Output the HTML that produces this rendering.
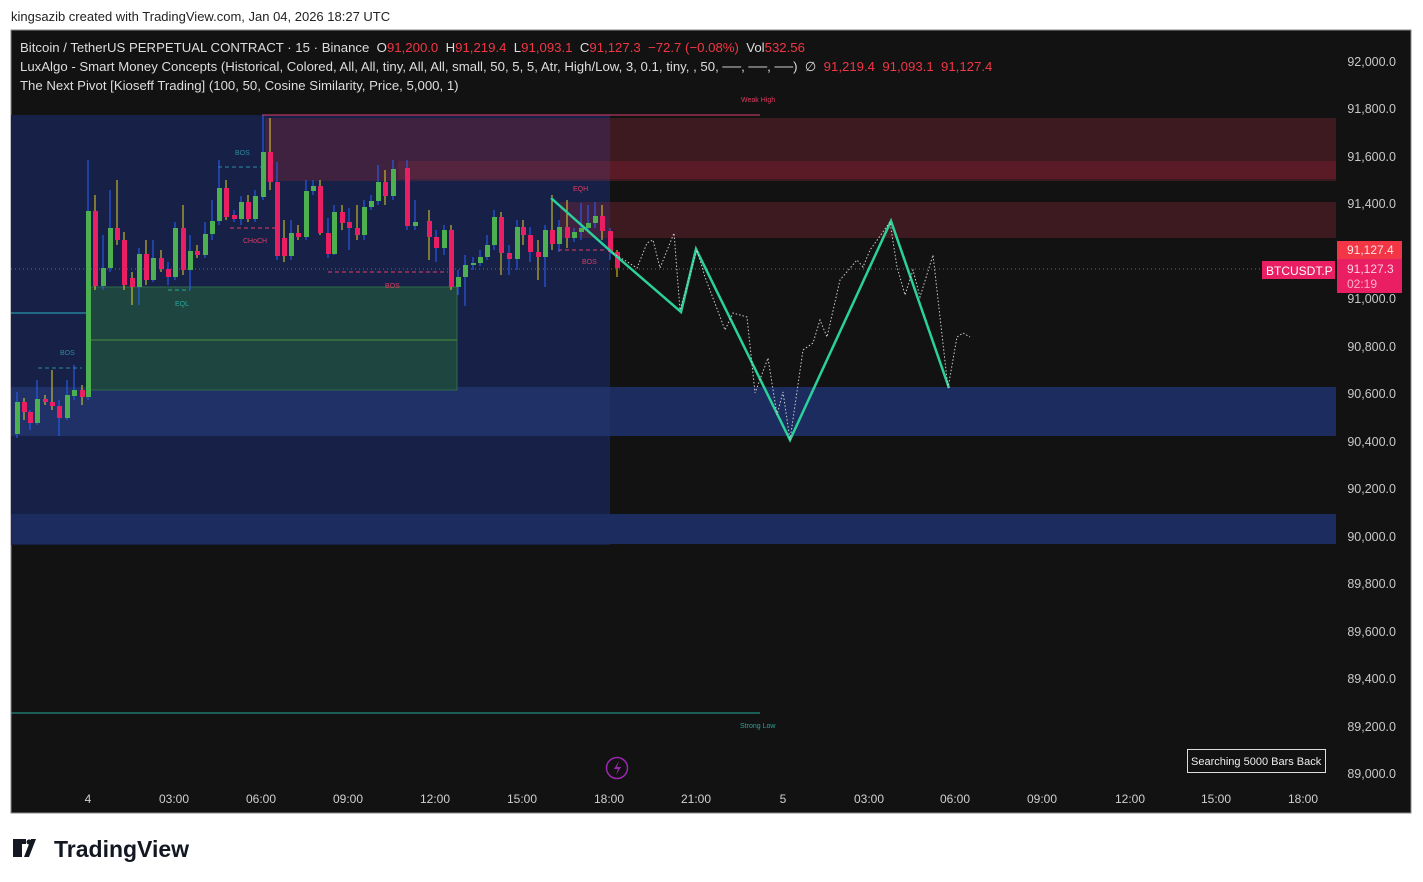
<!DOCTYPE html>
<html><head><meta charset="utf-8"><style>
body{margin:0;width:1423px;height:882px;background:#fff;overflow:hidden;font-family:"Liberation Sans",sans-serif;position:relative}
.t{position:absolute;white-space:nowrap}
</style></head><body>
<div class="t" style="left:11px;top:9px;font-size:13px;color:#222">kingsazib created with TradingView.com, Jan 04, 2026 18:27 UTC</div>
<div class="t" style="left:20px;top:38px;font-size:13.2px;color:#ddd;white-space:pre;line-height:19px">Bitcoin / TetherUS PERPETUAL CONTRACT · 15 · Binance  O<span style="color:#f23645">91,200.0</span>  H<span style="color:#f23645">91,219.4</span>  L<span style="color:#f23645">91,093.1</span>  C<span style="color:#f23645">91,127.3  −72.7 (−0.08%)</span>  Vol<span style="color:#f23645">532.56</span>
LuxAlgo - Smart Money Concepts (Historical, Colored, All, All, tiny, All, All, small, 50, 5, 5, Atr, High/Low, 3, 0.1, tiny, , 50, ──, ──, ──)  ∅  <span style="color:#f23645">91,219.4  91,093.1  91,127.4</span>
The Next Pivot [Kioseff Trading] (100, 50, Cosine Similarity, Price, 5,000, 1)</div>
<svg style="position:absolute;left:0;top:0;z-index:-1" width="1423" height="882" xmlns="http://www.w3.org/2000/svg" font-family="Liberation Sans, sans-serif">
<rect x="11" y="30" width="1400" height="783" fill="#121212" stroke="#888" stroke-width="1"/>
<rect x="11" y="115" width="599" height="430" fill="#172148"/>
<rect x="11" y="387" width="1325" height="49" fill="#1c2c5e"/>
<rect x="11" y="514" width="1325" height="30" fill="#1c2c5e"/>
<rect x="11" y="387" width="599" height="49" fill="#1f3166"/>
<rect x="610" y="118" width="726" height="63" fill="#3d1a1f"/>
<rect x="265" y="118" width="345" height="63" fill="#3e2240"/>
<rect x="610" y="161" width="726" height="18" fill="#5b1b26"/>
<rect x="398" y="161" width="212" height="18" fill="#55253f"/>
<rect x="610" y="202" width="726" height="36" fill="#3d1a1f"/>
<rect x="560" y="202" width="50" height="36" fill="#3e2240"/>
<rect x="88" y="287" width="369" height="103" fill="#1f4540" stroke="#2f6a4a" stroke-width="1"/>
<line x1="88" y1="340" x2="457" y2="340" stroke="#4a8a3a"/>
<line x1="11" y1="313" x2="88" y2="313" stroke="#2ab0c0"/>
<line x1="262" y1="115" x2="760" y2="115" stroke="#e03a70"/>
<line x1="11" y1="713" x2="760" y2="713" stroke="#26a69a"/>
<line x1="11" y1="269" x2="1262" y2="269" stroke="#e0306a" stroke-dasharray="1,3"/>
<text x="741" y="102" font-size="7" fill="#e03a60">Weak High</text>
<text x="740" y="728" font-size="7" fill="#26a69a">Strong Low</text>
<text x="235" y="155" font-size="7" fill="#2a8aa0">BOS</text>
<text x="60" y="355" font-size="7" fill="#2a8aa0">BOS</text>
<text x="175" y="306" font-size="7" fill="#26a69a">EQL</text>
<text x="243" y="243" font-size="7" fill="#e03a60">CHoCH</text>
<text x="385" y="288" font-size="7" fill="#e03a60">BOS</text>
<text x="573" y="191" font-size="7" fill="#e03a60">EQH</text>
<text x="582" y="264" font-size="7" fill="#e03a60">BOS</text>
<g stroke-dasharray="4,3" stroke-width="1" fill="none">
<path d="M38 368H82M218 167H262M230 228H276M328 272H448M558 250H605" stroke="#e03a60"/>
<path d="M38 368H82M218 167H262" stroke="#2a8aa0"/>
<path d="M168 290H190" stroke="#26a69a"/>
</g>
<g stroke-width="1">
<path d="M17 392V438M24 398V420M30 410V430M37 380V425M45 395V405M52 370V410M59 400V436M67 380V420M74 365V400M82 385V405M88 160V400M95 195V290M103 235V290M110 190V272M117 180V245M124 232V290M132 272V305M139 248V305M146 240V285M153 240V282M161 250V272M168 262V285M175 222V280M183 205V275M190 235V290M197 245V258M205 222V258M212 200V240M219 160V225M226 180V220M234 210V222M241 196V225M248 195V222M255 190V222M263 115V200M270 118V190M277 162V260M284 220V262M291 220V260M298 225V240M306 180V240M313 180V195M320 180V235M328 218V258M334 205V255M342 205V230M349 208V250M357 205V240M364 200V240M371 195V210M378 165V205M385 170V205M393 160V200M407 160V230M415 200V230M429 210V260M436 230V262M444 225V255M451 225V290M458 270V295M465 255V306M473 257V270M480 250V266M487 235V260M494 210V250M501 212V275M509 245V275M517 220V270M523 220V245M530 227V262M538 240V280M545 225V287M552 195V250M559 220V252M567 200V248M574 228V242M581 203V240M588 205V232M595 202V228M602 205V240M610 228V260M617 250V277" stroke="#2962ff"/>
</g>
<g stroke="#e8d02a" stroke-width="1">
<path d="M24 398V420M45 395V405M52 370V410M82 385V405M95 195V290M117 180V245M124 232V290M132 272V305M146 240V285M161 250V272M183 205V275M197 245V258M226 180V220M248 195V222M270 118V190M284 220V262M298 225V240M320 180V235M342 205V230M357 205V240M385 170V205M429 210V260M451 225V290M501 212V275M523 220V245M538 240V280M552 195V250M567 200V248M602 205V240M617 250V277"/>
</g>
<g fill="#4caf50">
<rect x="15" y="402" width="5" height="32"/><rect x="35" y="399" width="5" height="24"/><rect x="65" y="395" width="5" height="23"/><rect x="72" y="390" width="5" height="6"/><rect x="86" y="211" width="5" height="186"/><rect x="101" y="268" width="5" height="18"/><rect x="108" y="228" width="5" height="40"/><rect x="137" y="254" width="5" height="33"/><rect x="151" y="258" width="5" height="22"/><rect x="173" y="228" width="5" height="49"/><rect x="188" y="251" width="5" height="19"/><rect x="203" y="234" width="5" height="21"/><rect x="210" y="221" width="5" height="13"/><rect x="217" y="188" width="5" height="33"/><rect x="239" y="202" width="5" height="17"/><rect x="253" y="196" width="5" height="23"/><rect x="261" y="152" width="5" height="45"/><rect x="289" y="233" width="5" height="23"/><rect x="304" y="191" width="5" height="46"/><rect x="311" y="186" width="5" height="5"/><rect x="332" y="212" width="5" height="42"/><rect x="362" y="207" width="5" height="28"/><rect x="369" y="201" width="5" height="6"/><rect x="376" y="182" width="5" height="19"/><rect x="391" y="169" width="5" height="27"/><rect x="413" y="222" width="5" height="4"/><rect x="442" y="230" width="5" height="18"/><rect x="456" y="277" width="5" height="10"/><rect x="463" y="265" width="5" height="12"/><rect x="471" y="263" width="5" height="2"/><rect x="478" y="257" width="5" height="6"/><rect x="485" y="245" width="5" height="12"/><rect x="492" y="217" width="5" height="28"/><rect x="515" y="227" width="5" height="32"/><rect x="543" y="230" width="5" height="27"/><rect x="557" y="227" width="5" height="17"/><rect x="572" y="232" width="5" height="6"/><rect x="579" y="228" width="5" height="4"/><rect x="586" y="223" width="5" height="5"/><rect x="593" y="216" width="5" height="7"/>
</g>
<g fill="#e91e63">
<rect x="22" y="402" width="5" height="10"/><rect x="28" y="412" width="5" height="11"/><rect x="43" y="399" width="5" height="3"/><rect x="50" y="402" width="5" height="4"/><rect x="57" y="406" width="5" height="12"/><rect x="80" y="390" width="5" height="7"/><rect x="93" y="211" width="5" height="75"/><rect x="115" y="228" width="5" height="12"/><rect x="122" y="240" width="5" height="45"/><rect x="130" y="278" width="5" height="9"/><rect x="144" y="254" width="5" height="26"/><rect x="159" y="258" width="5" height="11"/><rect x="166" y="269" width="5" height="8"/><rect x="181" y="228" width="5" height="42"/><rect x="195" y="251" width="5" height="4"/><rect x="224" y="188" width="5" height="29"/><rect x="232" y="215" width="5" height="4"/><rect x="246" y="202" width="5" height="17"/><rect x="268" y="152" width="5" height="30"/><rect x="275" y="182" width="5" height="74"/><rect x="282" y="238" width="5" height="18"/><rect x="296" y="233" width="5" height="4"/><rect x="318" y="186" width="5" height="47"/><rect x="326" y="233" width="5" height="21"/><rect x="340" y="212" width="5" height="11"/><rect x="347" y="222" width="5" height="6"/><rect x="355" y="228" width="5" height="7"/><rect x="383" y="182" width="5" height="14"/><rect x="405" y="168" width="5" height="58"/><rect x="427" y="221" width="5" height="16"/><rect x="434" y="237" width="5" height="11"/><rect x="449" y="230" width="5" height="57"/><rect x="499" y="217" width="5" height="36"/><rect x="507" y="253" width="5" height="6"/><rect x="521" y="227" width="5" height="8"/><rect x="528" y="235" width="5" height="17"/><rect x="536" y="252" width="5" height="5"/><rect x="550" y="230" width="5" height="14"/><rect x="565" y="227" width="5" height="11"/><rect x="600" y="216" width="5" height="15"/><rect x="608" y="231" width="5" height="21"/><rect x="615" y="252" width="5" height="16"/>
</g>
<polyline points="551,198 615,255 681,312 696,249 790,440 891,221 949,388" fill="none" stroke="#2bd19a" stroke-width="2.5"/>
<polyline points="613,253 637,268 647,243 653,240 660,268 674,233 680,310 697,250 705,277 725,330 733,313 747,317 755,393 768,358 777,415 783,392 790,440 803,350 813,343 820,320 827,337 840,280 857,260 863,267 870,250 890,222 897,267 905,295 913,270 920,297 933,255 948,388 957,337 963,333 970,337" fill="none" stroke="#ccc" stroke-width="1" stroke-dasharray="1.5,2"/>
<g font-size="12.5" fill="#c8c8c8" text-anchor="end">
<text x="1396" y="66">92,000.0</text><text x="1396" y="113">91,800.0</text><text x="1396" y="161">91,600.0</text><text x="1396" y="208">91,400.0</text><text x="1396" y="303">91,000.0</text><text x="1396" y="351">90,800.0</text><text x="1396" y="398">90,600.0</text><text x="1396" y="446">90,400.0</text><text x="1396" y="493">90,200.0</text><text x="1396" y="541">90,000.0</text><text x="1396" y="588">89,800.0</text><text x="1396" y="636">89,600.0</text><text x="1396" y="683">89,400.0</text><text x="1396" y="731">89,200.0</text><text x="1396" y="778">89,000.0</text>
</g>
<rect x="1337" y="241" width="65" height="18" fill="#f23645"/>
<rect x="1337" y="259" width="65" height="34" fill="#e91e63"/>
<text x="1347" y="254" font-size="12" fill="#ffe0e0">91,127.4</text>
<text x="1347" y="273" font-size="12" fill="#ffd0e0">91,127.3</text>
<text x="1347" y="288" font-size="12" fill="#ffb0c8">02:19</text>
<rect x="1262" y="261" width="73" height="18" fill="#e91e63"/>
<text x="1266" y="275" font-size="12" fill="#fff">BTCUSDT.P</text>
<g font-size="12" fill="#d0d0d0" text-anchor="middle">
<text x="88" y="803">4</text><text x="174" y="803">03:00</text><text x="261" y="803">06:00</text><text x="348" y="803">09:00</text><text x="435" y="803">12:00</text><text x="522" y="803">15:00</text><text x="609" y="803">18:00</text><text x="696" y="803">21:00</text><text x="783" y="803">5</text><text x="869" y="803">03:00</text><text x="955" y="803">06:00</text><text x="1042" y="803">09:00</text><text x="1130" y="803">12:00</text><text x="1216" y="803">15:00</text><text x="1303" y="803">18:00</text>
</g>
<rect x="1187.5" y="749.5" width="138" height="23" fill="#121212" stroke="#ddd"/>
<text x="1191" y="765" font-size="11" fill="#eee">Searching 5000 Bars Back</text>
<circle cx="617" cy="768" r="10.5" fill="none" stroke="#9c27b0" stroke-width="1.5"/>
<path d="M619 761l-5 8h4l-2 6 5-8h-4z" fill="#9c27b0"/>
<path d="M13 839h13v5h-4v13h-9z M31 839h5l-7 18h-5z" fill="#131722"/>
<circle cx="29" cy="842" r="2.5" fill="#131722"/>
<text x="54" y="857" font-size="23" font-weight="bold" fill="#131722">TradingView</text>
</svg>
</body></html>
